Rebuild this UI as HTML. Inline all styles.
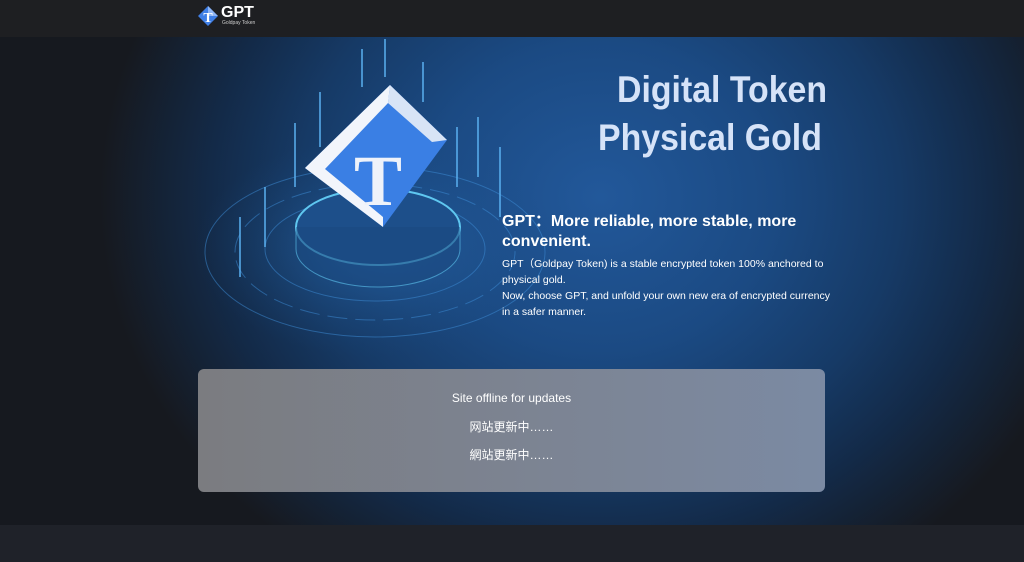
<!DOCTYPE html>
<html><head><meta charset="utf-8"><style>
*{margin:0;padding:0;box-sizing:border-box}
body{width:1024px;height:562px;overflow:hidden;background:#1f2229;font-family:"Liberation Sans","Noto Sans CJK SC",sans-serif;position:relative}
.hdr{position:absolute;left:0;top:0;width:1024px;height:37px;background:#1e1f22}
.hero{position:absolute;left:0;top:37px;width:1024px;height:488px;background:radial-gradient(ellipse 500px 440px at 600px 160px,#22589a 0%,#1b4a83 35%,#163a66 60%,#132a48 78%,#16191f 100%)}
.t1{position:absolute;color:#d6e3f8;font-weight:bold;font-size:37px;transform:scaleX(0.915);transform-origin:left top;white-space:nowrap}
.card{position:absolute;left:198px;top:369px;width:627px;height:123px;border-radius:6px;background:linear-gradient(90deg,#7b7c80,#7c8698 70%,#7b8aa3);color:#fff;text-align:center;font-size:12px}
</style></head><body>
<div class="hdr">
<svg style="position:absolute;left:197px;top:5px" width="22" height="22" viewBox="0 0 22 22"><path d="M11 1 L21 11 L11 21 L1 11Z" fill="#3f7fe6"/><path d="M11 1 L21 11 L11 11Z" fill="#8fb6f5"/><text x="11" y="17" font-family="Liberation Serif" font-weight="bold" font-size="14" fill="#fff" text-anchor="middle">T</text></svg>
<div style="position:absolute;left:221px;top:4px;color:#fff;font-weight:bold;font-size:16px">GPT</div>
<div style="position:absolute;left:222px;top:20px;color:#ccc;font-size:5px">Goldpay Token</div>
</div>
<div class="hero">
<svg width="1024" height="488" style="position:absolute;left:0;top:0">
<defs><radialGradient id="g" cx="50%" cy="50%" r="50%"><stop offset="0" stop-color="#2a6fb8" stop-opacity=".6"/><stop offset="1" stop-color="#1a4a80" stop-opacity="0"/></radialGradient></defs>
<ellipse cx="375" cy="210" rx="180" ry="110" fill="url(#g)"/>
<g fill="none" stroke="#3d8ed8" stroke-opacity=".5">
<ellipse cx="375" cy="215" rx="170" ry="85"/>
<ellipse cx="375" cy="215" rx="140" ry="68" stroke-dasharray="20 8"/>
<ellipse cx="375" cy="212" rx="110" ry="52"/>
</g>
<ellipse cx="378" cy="190" rx="82" ry="38" fill="#1d4f8a" stroke="#5fc7f0" stroke-width="2"/>
<path d="M296 190 v22 a82 38 0 0 0 164 0 v-22" fill="#1b4a80" fill-opacity=".6" stroke="#5fc7f0" stroke-opacity=".6"/>
<g stroke="#5ab0f0" stroke-width="1.5">
<line x1="385" y1="2" x2="385" y2="40"/><line x1="362" y1="12" x2="362" y2="50"/><line x1="423" y1="25" x2="423" y2="65"/><line x1="320" y1="55" x2="320" y2="110"/><line x1="295" y1="86" x2="295" y2="150"/><line x1="457" y1="90" x2="457" y2="150"/><line x1="478" y1="80" x2="478" y2="140"/><line x1="500" y1="110" x2="500" y2="180"/><line x1="265" y1="150" x2="265" y2="210"/><line x1="240" y1="180" x2="240" y2="240"/>
</g>
<path d="M390 48 L447 103 L383 190 L305 131Z" fill="#3a7fe4"/>
<path d="M390 48 L447 103 L432 105 L388 66Z" fill="#d8e4f6"/>
<path d="M305 131 L390 48 L388 66 L325 132 L383 180 L383 190Z" fill="#f2f5fb"/>
<text x="378" y="168" font-family="Liberation Serif" font-weight="bold" font-size="72" fill="#eef2fa" text-anchor="middle">T</text>
</svg>
<div class="t1" style="left:617px;top:32px">Digital Token</div>
<div class="t1" style="left:598px;top:80px">Physical Gold</div>
<div style="position:absolute;left:502px;top:175px;width:330px;color:#fff;font-weight:bold;font-size:16px;line-height:20px">GPT：More reliable, more stable, more convenient.</div>
<div style="position:absolute;left:502px;top:219px;width:330px;color:#fff;font-size:10.5px;line-height:16px">GPT（Goldpay Token) is a stable encrypted token 100% anchored to physical gold.<br>Now, choose GPT, and unfold your own new era of encrypted currency in a safer manner.</div>
</div>
<div class="card">
<div style="position:absolute;width:100%;top:22px">Site offline for updates</div>
<div style="position:absolute;width:100%;top:49px">网站更新中……</div>
<div style="position:absolute;width:100%;top:77px">網站更新中……</div>
</div>
</body></html>
